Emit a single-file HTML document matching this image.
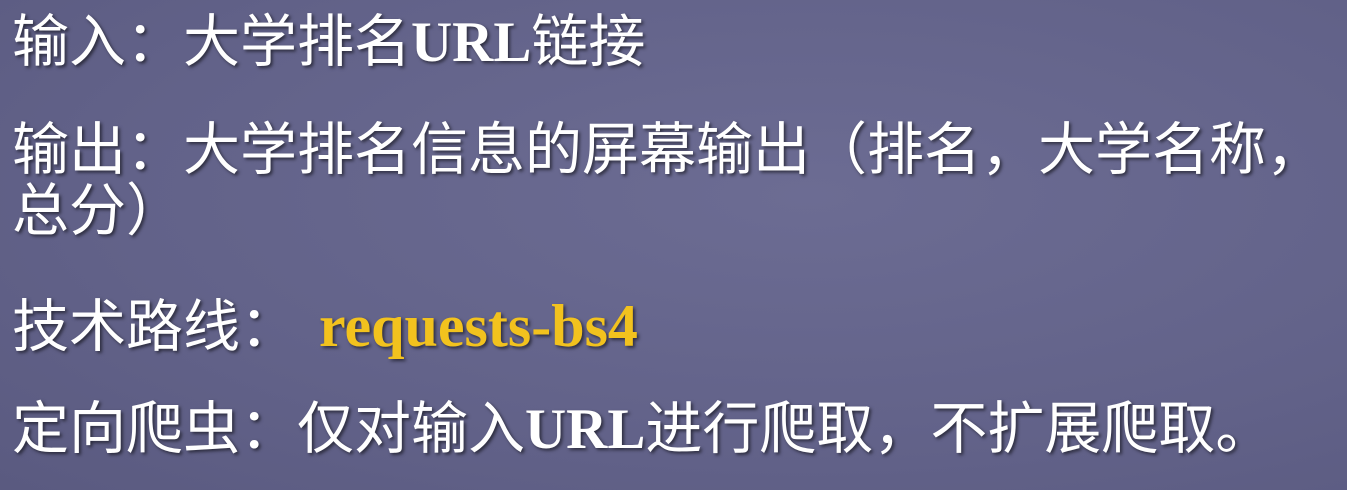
<!DOCTYPE html>
<html><head><meta charset="utf-8"><style>
html,body{margin:0;padding:0}
body{width:1347px;height:490px;overflow:hidden;background:radial-gradient(ellipse at 60% 40%,#6c6c93 0%,#626289 60%,#5a5a80 100%);position:relative;font-family:"Liberation Sans","Noto Sans CJK SC",sans-serif;color:#fff}
.l{position:absolute;left:12px;font-size:57px;line-height:1;white-space:nowrap;text-shadow:2px 2px 3px rgba(0,0,0,.55)}
.s{font-family:"Liberation Serif",serif;font-weight:bold}
.y{font-family:"Liberation Serif",serif;font-weight:bold;color:#f2c21e;font-size:60px;margin-left:22px}
</style></head><body>
<div class="l" style="top:14px">输入：大学排名<span class="s">URL</span>链接</div>
<div class="l" style="top:122px">输出：大学排名信息的屏幕输出（排名，大学名称，</div>
<div class="l" style="top:183px">总分）</div>
<div class="l" style="top:296px">技术路线：<span class="y">requests-bs4</span></div>
<div class="l" style="top:401px">定向爬虫：仅对输入<span class="s">URL</span>进行爬取，不扩展爬取。</div>
</body></html>
